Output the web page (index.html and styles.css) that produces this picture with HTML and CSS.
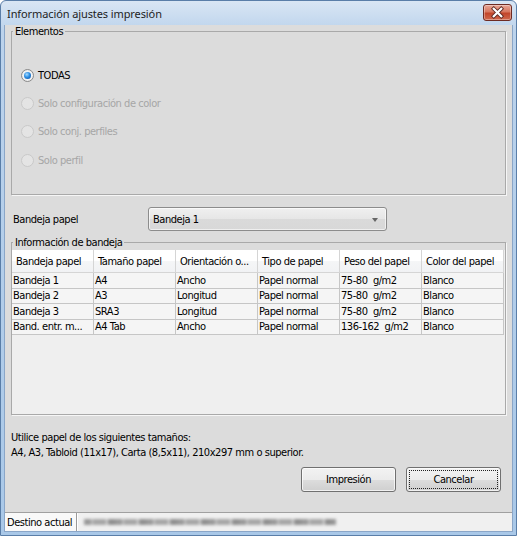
FILE: index.html
```html
<!DOCTYPE html>
<html lang="es">
<head>
<meta charset="utf-8">
<title>Información ajustes impresión</title>
<link rel="stylesheet" href="styles.css">
</head>
<body>
<div class="window">
  <div class="titlebar">
    <span class="title">Información ajustes impresión</span>
    <button class="close" aria-label="Cerrar">
      <svg width="29" height="17" viewBox="0 0 29 17">
        <path d="M10.5 4.5 L18.5 12.5 M18.5 4.5 L10.5 12.5" stroke="#5b2620" stroke-width="4.2" stroke-linecap="square"/>
        <path d="M10.5 4.5 L18.5 12.5 M18.5 4.5 L10.5 12.5" stroke="#ffffff" stroke-width="2.4" stroke-linecap="square"/>
      </svg>
    </button>
  </div>
  <div class="client">
    <fieldset class="group group-elem">
      <legend>Elementos</legend>
      <div class="radios">
        <label class="radio-row"><span class="radio checked"></span><span>TODAS</span></label>
        <label class="radio-row disabled"><span class="radio"></span><span>Solo configuración de color</span></label>
        <label class="radio-row disabled"><span class="radio"></span><span>Solo conj. perfiles</span></label>
        <label class="radio-row disabled"><span class="radio"></span><span>Solo perfil</span></label>
      </div>
    </fieldset>

    <div class="tray-row">
      <span class="tray-label">Bandeja papel</span>
      <div class="combo"><span>Bandeja 1</span><span class="arrow"></span></div>
    </div>

    <fieldset class="group group-info">
      <legend>Información de bandeja</legend>
      <div class="grid">
        <table>
          <thead>
            <tr><th>Bandeja papel</th><th>Tamaño papel</th><th>Orientación o...</th><th>Tipo de papel</th><th>Peso del papel</th><th>Color del papel</th></tr>
          </thead>
          <tbody>
            <tr><td>Bandeja 1</td><td>A4</td><td>Ancho</td><td>Papel normal</td><td>75-80&nbsp; g/m2</td><td>Blanco</td></tr>
            <tr><td>Bandeja 2</td><td>A3</td><td>Longitud</td><td>Papel normal</td><td>75-80&nbsp; g/m2</td><td>Blanco</td></tr>
            <tr><td>Bandeja 3</td><td>SRA3</td><td>Longitud</td><td>Papel normal</td><td>75-80&nbsp; g/m2</td><td>Blanco</td></tr>
            <tr><td>Band. entr. m...</td><td>A4 Tab</td><td>Ancho</td><td>Papel normal</td><td>136-162&nbsp; g/m2</td><td>Blanco</td></tr>
          </tbody>
        </table>
      </div>
    </fieldset>

    <p class="note">Utilice papel de los siguientes tamaños:<br>A4, A3, Tabloid (11x17), Carta (8,5x11), 210x297 mm o superior.</p>

    <div class="buttons">
      <button class="btn">Impresión</button>
      <button class="btn focused"><span class="focus-ring">Cancelar</span></button>
    </div>

    <div class="statusbar">
      <span class="status-label">Destino actual</span>
      <span class="status-value"><span class="smudge"></span></span>
    </div>
  </div>
</div>
</body>
</html>
```

FILE: styles.css
```css
html, body {
  margin: 0;
  padding: 0;
  background: #ffffff;
}

body {
  width: 517px;
  height: 536px;
  overflow: hidden;
  font-family: "DejaVu Sans Condensed", "DejaVu Sans", sans-serif;
  font-stretch: condensed;
  font-size: 11px;
  letter-spacing: -0.45px;
  color: #000;
}

.window {
  width: 517px;
  height: 536px;
  box-sizing: border-box;
  display: flex;
  flex-direction: column;
  border: 1px solid #5a7ea8;
  border-radius: 6px 6px 0 0;
  background: linear-gradient(#d9e6f4, #bcd3ec 30px, #a9c8e8);
  padding: 0 3px 3px 3px;
}

.titlebar {
  height: 24px;
  display: flex;
  align-items: center;
  justify-content: space-between;
  padding: 0 1px 0 3px;
}

.title {
  font-family: "Noto Sans", "DejaVu Sans", sans-serif;
  font-stretch: normal;
  font-size: 11px;
  letter-spacing: -0.1px;
  color: #1e1e1e;
  margin-top: 1px;
}

.close {
  width: 29px;
  height: 17px;
  margin-top: -2px;
  padding: 0;
  border: 1px solid #6e2b23;
  border-radius: 3px;
  background: linear-gradient(#e8a697, #d7775f 45%, #c2452a 55%, #d0684d);
  box-shadow: inset 0 0 0 1px rgba(255, 255, 255, 0.35);
  display: flex;
  align-items: center;
  justify-content: center;
  box-sizing: border-box;
}

.close svg {
  display: block;
}

.client {
  flex: 1;
  display: flex;
  flex-direction: column;
  background: #dcdcdc;
  border: 1px solid #8aa6c8;
  border-top: none;
}

.group {
  margin: 0 6px;
  padding: 0;
  border: 1px solid #a9a9a9;
  box-shadow: 1px 1px 0 #f6f6f6;
  min-inline-size: 0;
}

.group legend {
  padding: 0 2px;
  margin-left: 1px;
  line-height: 13px;
  height: 13px;
}

.radios {
  display: flex;
  flex-direction: column;
  padding: 23px 0 20px 9px;
}

.radio-row {
  height: 28.33px;
  display: flex;
  align-items: center;
  gap: 4px;
}

.radio-row.disabled {
  color: #a6a6a6;
}

.radio {
  width: 13px;
  height: 13px;
  box-sizing: border-box;
  border-radius: 50%;
  border: 1px solid #8a8a8a;
  background: radial-gradient(circle at 50% 50%, #e2e2e2 0, #f4f4f4 55%, #d6d6d6 100%);
  display: flex;
  align-items: center;
  justify-content: center;
}

.radio-row.disabled .radio {
  border-color: #c9c9c9;
  background: #e4e4e4;
}

.radio.checked::after {
  content: "";
  width: 7px;
  height: 7px;
  border-radius: 50%;
  background: radial-gradient(circle at 40% 35%, #a8dcff 0, #2d8fe4 45%, #0b4a9c 100%);
}

.tray-row {
  margin-top: 12px;
  display: flex;
  align-items: center;
  padding-left: 8px;
  height: 24px;
}

.tray-label {
  width: 135px;
}

.combo {
  width: 239px;
  height: 24px;
  box-sizing: border-box;
  border: 1px solid #8c8c8c;
  border-radius: 3px;
  background: linear-gradient(#f0f0f0, #e6e6e6 50%, #dadada 51%, #d8d8d8);
  box-shadow: inset 0 0 0 1px rgba(255, 255, 255, 0.6);
  display: flex;
  align-items: center;
  justify-content: space-between;
  padding: 0 8px 0 4px;
}

.arrow {
  width: 0;
  height: 0;
  border-left: 3.5px solid transparent;
  border-right: 3.5px solid transparent;
  border-top: 4px solid #666;
  margin-top: 1px;
}

.group-info {
  margin-top: 5px;
}

.grid {
  margin-top: 1px;
  height: 164px;
  background: #efefef;
  overflow: hidden;
}

table {
  border-collapse: separate;
  border-spacing: 0;
  table-layout: fixed;
  width: 492px;
}

th, td {
  width: 82px;
  box-sizing: border-box;
  white-space: nowrap;
  overflow: hidden;
  text-align: left;
  font-weight: normal;
}

th {
  height: 23px;
  padding: 0 0 0 4px;
  border-right: 1px solid #d5d5d5;
  border-bottom: 1px solid #d5d5d5;
  background: linear-gradient(#ffffff, #ffffff 50%, #f5f6f7 51%, #f1f2f4);
}

td {
  height: 15.5px;
  padding: 0 0 0 1px;
  line-height: 14px;
  background: #f5f5f5;
  border-right: 1px solid #c6c6c6;
  border-bottom: 1px solid #c6c6c6;
}

.note {
  margin: 15px 0 0 6px;
  line-height: 15px;
}

.buttons {
  margin-top: 7px;
  display: flex;
  justify-content: flex-end;
  gap: 10px;
  padding-right: 11px;
}

.btn {
  width: 95px;
  height: 25px;
  box-sizing: border-box;
  border: 1px solid #707070;
  border-radius: 3px;
  background: linear-gradient(#f2f2f2, #ebebeb 50%, #dddddd 51%, #cfcfcf);
  box-shadow: inset 0 0 0 1px rgba(255, 255, 255, 0.7);
  font: inherit;
  letter-spacing: inherit;
  color: #000;
  padding: 0;
  display: flex;
  align-items: center;
  justify-content: center;
}

.btn.focused {
  padding: 2px;
}

.focus-ring {
  flex: 1;
  align-self: stretch;
  display: flex;
  align-items: center;
  justify-content: center;
  outline: 1px dotted #222;
  outline-offset: -1px;
}

.statusbar {
  margin-top: auto;
  height: 18px;
  display: flex;
  border-top: 1px solid #a0a0a0;
  background: #f0f0f0;
}

.status-label {
  width: 72px;
  box-sizing: border-box;
  padding-left: 2px;
  white-space: nowrap;
  display: flex;
  align-items: center;
  background: #f9f9f9;
  border-right: 1px solid #9a9a9a;
}

.status-value {
  flex: 1;
  display: flex;
  align-items: center;
  border-left: 1px solid #ffffff;
}

.smudge {
  margin-left: 6px;
  width: 252px;
  height: 6px;
  background: repeating-linear-gradient(90deg, #8a8a8a 0 7px, #b9b9b9 7px 9px, #9a9a9a 9px 22px, #cdcdcd 22px 24px, #7f7f7f 24px 31px);
  filter: blur(1.4px);
  opacity: 0.85;
}
```
